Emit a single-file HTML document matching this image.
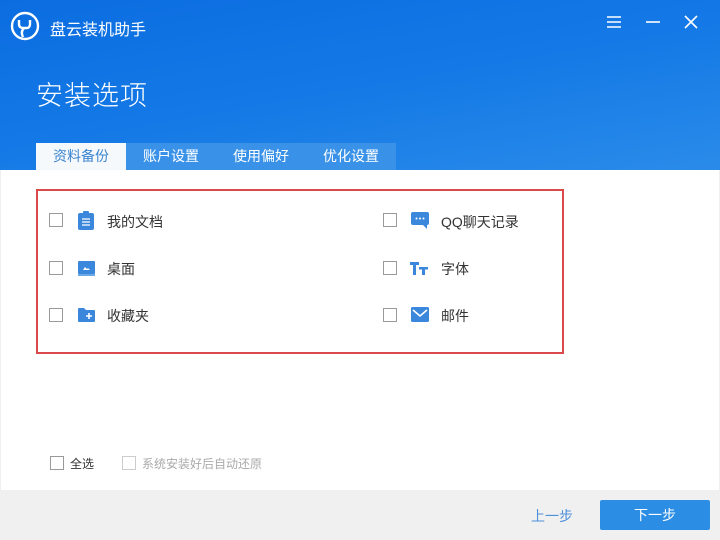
<!DOCTYPE html>
<html><head><meta charset="utf-8"><style>
*{margin:0;padding:0;box-sizing:border-box}
body{width:720px;height:540px;overflow:hidden;font-family:"Liberation Sans","Noto Sans CJK SC",sans-serif;background:#f0f0f0;position:relative}
.hdr{position:absolute;left:0;top:0;width:720px;height:170px;background:linear-gradient(170deg,#0b6de0 0%,#1479e6 50%,#2a8be9 100%)}
.t{position:absolute;color:#fff}
.tabs{position:absolute;top:143px;left:36px;height:27px;display:flex}
.tab{width:90px;height:27px;line-height:27px;text-align:center;font-size:14px;color:#fff;background:#3a92e8}
.tab.a{background:#f6f9fc;color:#3b84cf}
.body{position:absolute;left:1px;top:170px;width:718px;height:320px;background:#fff}
.box{position:absolute;left:36px;top:189px;width:528px;height:165px;border:2px solid #d9484a}
.cb{position:absolute;width:14px;height:14px;border:1px solid #9a9a9a;background:#fff}
.lb{position:absolute;font-size:14px;color:#333;line-height:16px}
.ic{position:absolute}
</style></head><body>
<div class="hdr"></div>
<svg class="ic" style="left:10px;top:11px" width="30" height="30" viewBox="0 0 30 30"><circle cx="15" cy="15" r="13" fill="none" stroke="#fff" stroke-width="2.4"/><path d="M9 9v4c0 3 2 4 4 4h4c2 0 3-2 3-4V9M14 17c-2 2-3 5-1 9" fill="none" stroke="#fff" stroke-width="2.4"/></svg>
<div class="t" style="left:50px;top:16px;font-size:16px">盘云装机助手</div>
<svg class="ic" style="left:606px;top:15px" width="16" height="14"><path d="M1 2h14M1 7h14M1 12h14" stroke="#fff" stroke-width="1.4"/></svg>
<svg class="ic" style="left:645px;top:15px" width="16" height="14"><path d="M1 7h14" stroke="#fff" stroke-width="1.6"/></svg>
<svg class="ic" style="left:684px;top:15px" width="14" height="14"><path d="M1 1l12 12M13 1L1 13" stroke="#fff" stroke-width="1.6"/></svg>
<div class="t" style="left:36px;top:74px;font-size:27px;letter-spacing:1px;font-weight:300">安装选项</div>
<div class="tabs"><div class="tab a">资料备份</div><div class="tab">账户设置</div><div class="tab">使用偏好</div><div class="tab">优化设置</div></div>
<div class="body"></div>
<div class="box"></div>
<div class="cb" style="left:49px;top:213px"></div>
<div class="cb" style="left:49px;top:261px"></div>
<div class="cb" style="left:49px;top:308px"></div>
<div class="cb" style="left:383px;top:213px"></div>
<div class="cb" style="left:383px;top:261px"></div>
<div class="cb" style="left:383px;top:308px"></div>
<svg class="ic" style="left:78px;top:211px" width="16" height="19"><rect x="0" y="2" width="16" height="17" rx="2" fill="#3b87dc"/><rect x="5" y="0" width="6" height="4" rx="1" fill="#3b87dc"/><path d="M4 8h8M4 11h8M4 14h8" stroke="#fff" stroke-width="1.3"/></svg>
<svg class="ic" style="left:78px;top:261px" width="17" height="15"><rect x="0" y="0" width="17" height="13" rx="1" fill="#3b87dc"/><path d="M5 9l2-3 2 2 1-1 2 2z" fill="#fff"/><rect x="0" y="13" width="17" height="2" fill="#6aa8e8"/></svg>
<svg class="ic" style="left:78px;top:307px" width="17" height="15"><path d="M0 2a1 1 0 011-1h5l2 2h8a1 1 0 011 1v10a1 1 0 01-1 1H1a1 1 0 01-1-1z" fill="#3b87dc"/><path d="M11 6v6M8 9h6" stroke="#fff" stroke-width="1.6"/></svg>
<svg class="ic" style="left:411px;top:212px" width="18" height="18"><rect x="0" y="0" width="18" height="13" rx="2" fill="#3b87dc"/><path d="M12 13l4 4v-4z" fill="#3b87dc"/><circle cx="5.5" cy="6.5" r="1" fill="#fff"/><circle cx="9" cy="6.5" r="1" fill="#fff"/><circle cx="12.5" cy="6.5" r="1" fill="#fff"/></svg>
<svg class="ic" style="left:410px;top:261px" width="18" height="14"><path d="M0 1h9v3H6v10H3V4H0zM9 6h9v2.5h-3V14h-3V8.5H9z" fill="#3b87dc"/></svg>
<svg class="ic" style="left:411px;top:307px" width="18" height="15"><rect x="0" y="0" width="18" height="15" rx="1.5" fill="#3b87dc"/><path d="M2 3l7 6 7-6" fill="none" stroke="#fff" stroke-width="1.6"/></svg>
<div class="lb" style="left:107px;top:214px">我的文档</div>
<div class="lb" style="left:107px;top:261px">桌面</div>
<div class="lb" style="left:107px;top:308px">收藏夹</div>
<div class="lb" style="left:441px;top:214px">QQ聊天记录</div>
<div class="lb" style="left:441px;top:261px">字体</div>
<div class="lb" style="left:441px;top:308px">邮件</div>
<div class="cb" style="left:50px;top:456px"></div>
<div class="lb" style="left:70px;top:456px;font-size:12px">全选</div>
<div class="cb" style="left:122px;top:456px;border-color:#ccc"></div>
<div class="lb" style="left:142px;top:456px;font-size:12px;color:#aaa">系统安装好后自动还原</div>
<div class="lb" style="left:531px;top:508px;color:#4a8fd8">上一步</div>
<div style="position:absolute;left:600px;top:500px;width:110px;height:30px;background:#2b8de4;border-radius:2px;color:#fff;font-size:14px;line-height:30px;text-align:center">下一步</div>
</body></html>
